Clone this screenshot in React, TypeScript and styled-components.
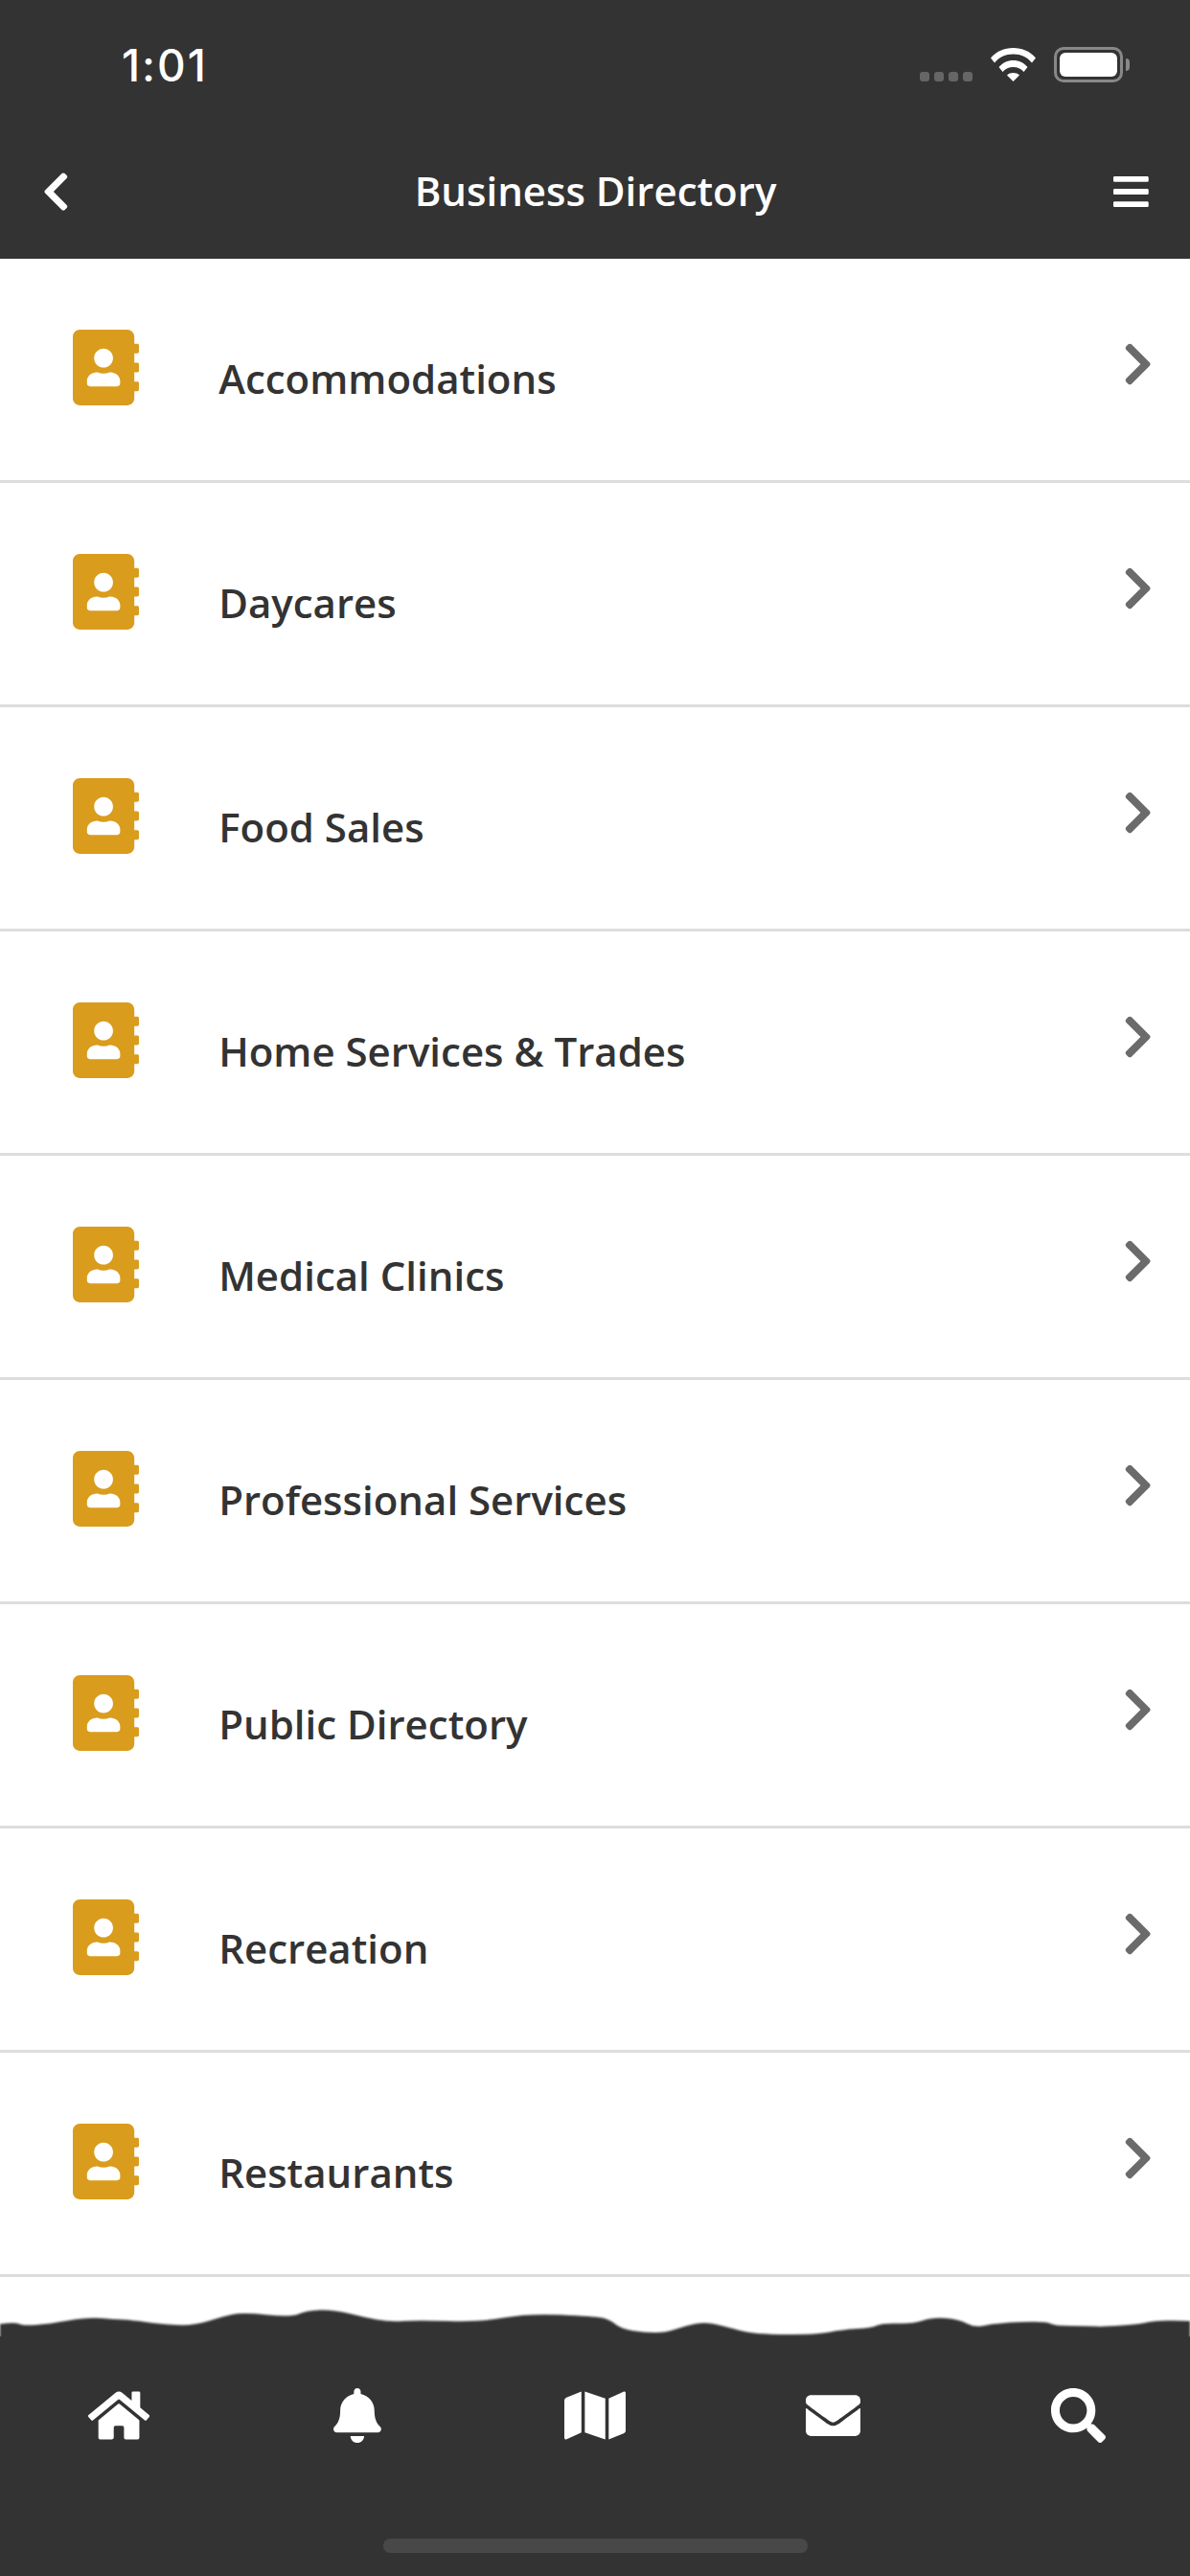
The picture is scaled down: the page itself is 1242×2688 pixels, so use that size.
import { FC } from 'react'
import styled, { createGlobalStyle } from 'styled-components'
import {
  FaAddressBook,
  FaBars,
  FaBell,
  FaChevronLeft,
  FaChevronRight,
  FaEnvelope,
  FaHome,
  FaMap,
  FaSearch,
} from 'react-icons/fa'

const categories = [
  'Accommodations',
  'Daycares',
  'Food Sales',
  'Home Services & Trades',
  'Medical Clinics',
  'Professional Services',
  'Public Directory',
  'Recreation',
  'Restaurants',
]

// outline of the torn paper edge above the tab bar, in page pixels
const edgePoints = [
  [0, 2425], [16, 2423], [24, 2427], [51, 2425], [91, 2418], [119, 2420], [138, 2421], [166, 2425],
  [202, 2427], [233, 2417], [253, 2413], [304, 2418], [320, 2411], [348, 2410], [380, 2418], [407, 2423],
  [435, 2421], [502, 2423], [550, 2414], [620, 2417], [636, 2420], [648, 2430], [672, 2434], [695, 2434],
  [715, 2427], [735, 2423], [755, 2427], [787, 2436], [854, 2436], [878, 2431], [910, 2429], [921, 2424],
  [953, 2425], [973, 2418], [1001, 2420], [1017, 2429], [1040, 2424], [1092, 2422], [1100, 2427],
  [1136, 2427], [1151, 2428], [1191, 2425], [1207, 2421], [1242, 2422],
]

const edgePath = () => {
  let d = `M0 2440 L0 2425`
  for (let i = 1; i < edgePoints.length - 1; i++) {
    const [x, y] = edgePoints[i]
    const [nx, ny] = edgePoints[i + 1]
    d += ` Q${x} ${y} ${(x + nx) / 2} ${(y + ny) / 2}`
  }
  return `${d} L1242 2422 L1242 2440 Z`
}

const App: FC = () => (
  <Page>
    <GlobalStyle />
    <Header>
      <StatusBar>
        <Clock>{'1:01'}</Clock>
        <StatusIcons>
          <SignalDots>
            <SignalDot />
            <SignalDot />
            <SignalDot />
            <SignalDot />
          </SignalDots>
          <WifiIcon viewBox={'0 0 47 36'}>
            <path d={'M0 11.5C6 4.5 14 1 23.5 1S41 4.5 47 11.5l-4 5C38 10.500 31.500 7.500 23.500 7.500S9 10.500 4 16.500z'} />
            <path d={'M8.500 21C12.500 16.500 17.500 14 23.500 14S34.500 16.500 38.500 21l-4 5C31.500 22.500 28 21 23.500 21S15.500 22.500 12.500 26z'} />
            <path d={'M17 29.500C18.800 27.700 21 27 23.500 27S28.200 27.700 30 29.500L23.500 36z'} />
          </WifiIcon>
          <Battery>
            <BatteryFill />
          </Battery>
        </StatusIcons>
      </StatusBar>
      <NavBar>
        <BackIcon>
          <FaChevronLeft />
        </BackIcon>
        <NavTitle>{'Business Directory'}</NavTitle>
        <MenuIcon>
          <FaBars />
        </MenuIcon>
      </NavBar>
    </Header>
    <List>
      {categories.map((name) => (
        <Row key={name}>
          <BookIcon>
            <FaAddressBook />
          </BookIcon>
          <RowLabel>{name}</RowLabel>
          <RowChevron>
            <FaChevronRight />
          </RowChevron>
        </Row>
      ))}
    </List>
    <Footer>
      <TornEdge viewBox={'0 2376 1242 64'} preserveAspectRatio={'none'}>
        <path d={edgePath()} fill={'#333333'} />
      </TornEdge>
      <TabBar>
        <Tabs>
          <Tab $ratio={1.125}>
            <FaHome />
          </Tab>
          <Tab $ratio={0.875}>
            <FaBell />
          </Tab>
          <Tab $ratio={1.125}>
            <FaMap />
          </Tab>
          <Tab $ratio={1}>
            <FaEnvelope />
          </Tab>
          <Tab $ratio={1}>
            <FaSearch />
          </Tab>
        </Tabs>
        <HomeIndicator />
      </TabBar>
    </Footer>
  </Page>
)

export default App

const GlobalStyle = createGlobalStyle`
  html, body {
    margin: 0;
    padding: 0;
    background: #fff;
  }
`

const Page = styled.div`
  width: 1242px;
  height: 2688px;
  overflow: hidden;
  display: flex;
  flex-direction: column;
  font-family: 'Open Sans', sans-serif;
`

const Header = styled.header`
  height: 270px;
  background: #333333;
  color: #fff;
`

const StatusBar = styled.div`
  height: 137px;
  display: flex;
  justify-content: space-between;
  padding: 38px 70px 0 127px;
  box-sizing: border-box;
`

const Clock = styled.div`
  font-family: Inter, sans-serif;
  font-size: 46px;
  line-height: 60px;
  font-weight: 500;
  letter-spacing: 2px;
`

const StatusIcons = styled.div`
  display: flex;
  align-items: flex-start;
  padding-top: 11px;
`

const SignalDots = styled.div`
  display: flex;
  gap: 5px;
  margin-top: 26px;
  margin-right: 19px;
`

const SignalDot = styled.span`
  width: 10px;
  height: 10px;
  border-radius: 3px;
  background: #666666;
`

const WifiIcon = styled.svg`
  width: 47px;
  height: 36px;
  fill: #fff;
  margin-right: 19px;
`

const Battery = styled.div`
  position: relative;
  width: 72px;
  height: 37px;
  box-sizing: border-box;
  border: 3px solid #888888;
  border-radius: 10px;
  padding: 3px;
  &::after {
    content: '';
    position: absolute;
    left: 72px;
    top: 9px;
    width: 4px;
    height: 13px;
    background: #888888;
    border-radius: 0 6px 6px 0;
  }
`

const BatteryFill = styled.div`
  height: 100%;
  background: #fff;
  border-radius: 6px;
`

const NavBar = styled.div`
  height: 133px;
  display: flex;
  align-items: center;
  justify-content: space-between;
  padding: 0 43px 0 44px;
  box-sizing: border-box;
`

const BackIcon = styled.div`
  display: flex;
  width: 60px;
  font-size: 46px;
  margin-top: -8px;
  svg {
    width: 0.625em;
  }
`

const MenuIcon = styled.div`
  display: flex;
  width: 60px;
  justify-content: flex-end;
  font-size: 42px;
  margin-top: -8px;
  svg {
    width: 0.875em;
  }
`

const NavTitle = styled.div`
  font-size: 42px;
  line-height: 56px;
  font-weight: 600;
  margin-top: -10px;
`

const List = styled.main`
  flex: none;
`

const Row = styled.div`
  height: 234px;
  box-sizing: border-box;
  border-bottom: 3px solid #dddddd;
  display: flex;
  align-items: flex-start;
  padding: 74px 39px 0 76px;
  color: #333333;
`

const BookIcon = styled.div`
  display: flex;
  font-size: 79px;
  color: #d99c1c;
  svg {
    width: 0.875em;
  }
`

const RowLabel = styled.div`
  margin-left: 83px;
  margin-top: 23px;
  font-size: 42px;
  line-height: 56px;
  font-weight: 600;
`

const RowChevron = styled.div`
  display: flex;
  margin-left: auto;
  font-size: 50px;
  color: #6b6b6b;
  margin-top: 11px;
  svg {
    width: 0.625em;
  }
`

const Footer = styled.footer`
  flex: 1;
  display: flex;
  flex-direction: column;
`

const TornEdge = styled.svg`
  display: block;
  width: 1242px;
  height: 64px;
  flex: none;
  filter: blur(0.8px);
`

const TabBar = styled.nav`
  position: relative;
  flex: 1;
  margin-top: -2px;
  background: #333333;
  padding-top: 54px;
  display: flex;
  flex-direction: column;
  align-items: center;
`

const Tabs = styled.div`
  width: 100%;
  display: grid;
  grid-template-columns: repeat(5, 248.4px);
  height: 57px;
`

const Tab = styled.div<{ $ratio: number }>`
  display: flex;
  justify-content: center;
  color: #fff;
  font-size: 57px;
  svg {
    width: ${({ $ratio }) => $ratio}em;
  }
  &:last-child {
    padding-left: 16px;
  }
`

const HomeIndicator = styled.div`
  width: 443px;
  height: 15px;
  margin-top: 100px;
  border-radius: 7px;
  background: #484848;
`
